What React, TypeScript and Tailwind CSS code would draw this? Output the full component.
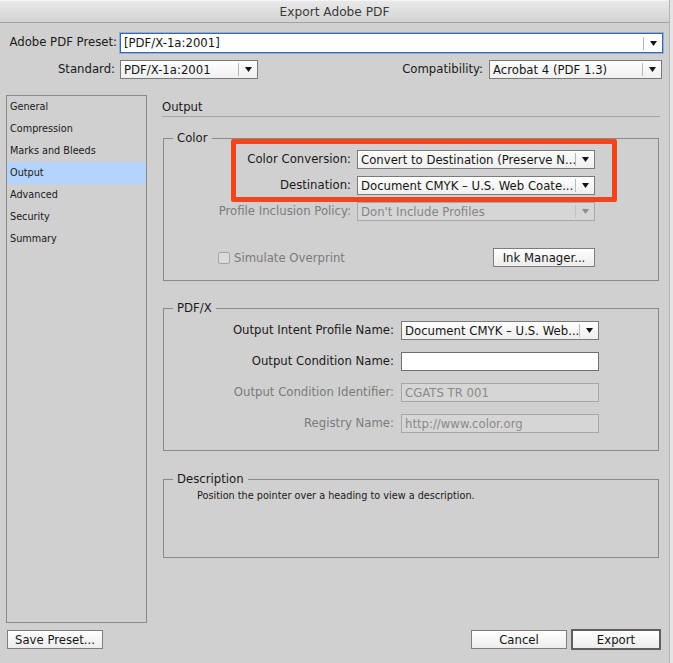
import React from "react";

function Arrow({ disabled }: { disabled?: boolean }) {
  return (
    <div className="flex h-full shrink-0 items-center">
      <div className={`h-[13px] w-px ${disabled ? "bg-[#c2c2c2]" : "bg-[#b8b8b8]"}`} />
      <div className="flex w-[18px] items-center justify-center">
        <svg width="7" height="5" viewBox="0 0 7 5">
          <path d="M0 0H7L3.5 5Z" fill={disabled ? "#8c8c8c" : "#141414"} />
        </svg>
      </div>
    </div>
  );
}

function Select({
  text,
  className = "",
  disabled,
  focus,
}: {
  text: string;
  className?: string;
  disabled?: boolean;
  focus?: boolean;
}) {
  const skin = disabled
    ? "border-[#a8a8a8] bg-[#d6d6d6] text-[#858585]"
    : focus
    ? "border-[#3d66a8] bg-white text-[#151515] shadow-[0_0_0_1px_#8eaee0]"
    : "border-[#7a7a7a] bg-linear-to-b from-white to-[#efefef] text-[#151515]";
  return (
    <div className={`flex h-[19px] items-center border ${skin} ${className}`}>
      <span className="min-w-0 flex-1 overflow-hidden whitespace-nowrap pl-[3px] leading-[14px]">{text}</span>
      <Arrow disabled={disabled} />
    </div>
  );
}

function Field({ text, disabled, className = "" }: { text?: string; disabled?: boolean; className?: string }) {
  return (
    <div
      className={`flex h-[19px] items-center border ${
        disabled ? "border-[#a8a8a8] bg-[#d6d6d6] text-[#8a8a8a]" : "border-[#6f6f6f] bg-white text-[#151515]"
      } ${className}`}
    >
      <span className="pl-[3px] leading-[14px]">{text}</span>
    </div>
  );
}

function Button({ label, className = "", primary }: { label: string; className?: string; primary?: boolean }) {
  return (
    <div
      className={`flex items-center justify-center bg-linear-to-b from-white to-[#ececec] text-[#151515] ${
        primary ? "h-[21px] border-2 border-[#5e5e5e]" : "h-[19px] border border-[#7d7d7d]"
      } ${className}`}
    >
      <span className="leading-[14px]">{label}</span>
    </div>
  );
}

const sideItems = ["General", "Compression", "Marks and Bleeds", "Output", "Advanced", "Security", "Summary"];

export default function App() {
  return (
    <div className="flex h-[663px] w-[673px] overflow-hidden font-['DejaVu_Sans',sans-serif] text-[11.7px] text-[#1a1a1a]">
      <div className="flex h-full w-[669px] flex-col bg-[#d0d0d0]">
        {/* title bar */}
        <div className="flex h-[23px] shrink-0 items-center justify-center border-t border-t-[#f4f4f4] border-b border-b-[#a3a3a3] bg-linear-to-b from-[#e9e9e9] to-[#d3d3d3]">
          <span className="text-[12.2px] leading-[14px] text-[#3a3a3a]">Export Adobe PDF</span>
        </div>

        <div className="flex flex-1 flex-col px-[6px]">
          {/* preset row */}
          <div className="mt-[10px] flex h-[20px] items-center">
            <div className="w-[111px] whitespace-nowrap text-right">Adobe PDF Preset:</div>
            <Select focus text="[PDF/X-1a:2001]" className="ml-[3px] h-[20px] flex-1" />
          </div>
          {/* standard row */}
          <div className="mt-[7px] flex h-[19px] items-center pr-[1px]">
            <div className="w-[109px] whitespace-nowrap text-right">Standard:</div>
            <Select text="PDF/X-1a:2001" className="ml-[5px] w-[138px]" />
            <div className="flex-1" />
            <div className="whitespace-nowrap">Compatibility:</div>
            <Select text="Acrobat 4 (PDF 1.3)" className="ml-[6px] w-[173px]" />
          </div>

          {/* main area */}
          <div className="mt-[16px] flex">
            <div className="h-[528px] w-[141px] shrink-0 border border-[#8a8a8a] text-[9.7px]">
              {sideItems.map((s) => (
                <div
                  key={s}
                  className={`flex h-[22px] items-center pl-[3px] ${s === "Output" ? "bg-[#b4d4fd]" : ""}`}
                >
                  {s}
                </div>
              ))}
            </div>

            <div className="relative ml-[15px] flex w-[498px] flex-col">
              <div className="border-b border-[#a4a4a4] pt-[5px] pb-[2px] leading-[14px]">Output</div>

              {/* Color */}
              <fieldset className="mx-[1px] mt-[14px] border border-[#8a8a8a] pr-[63px] pt-[5px] pb-[13px]">
                <legend className="ml-[9px] px-[4px] leading-[14px]">Color</legend>
                <div className="flex flex-col gap-[7px]">
                  <div className="flex items-center justify-end">
                    <span className="mr-[6px] whitespace-nowrap">Color Conversion:</span>
                    <Select text="Convert to Destination (Preserve N..." className="w-[238px]" />
                  </div>
                  <div className="flex items-center justify-end">
                    <span className="mr-[6px] whitespace-nowrap">Destination:</span>
                    <Select text="Document CMYK – U.S. Web Coate..." className="w-[238px]" />
                  </div>
                  <div className="flex items-center justify-end">
                    <span className="mr-[6px] whitespace-nowrap text-[#7b7b7b]">Profile Inclusion Policy:</span>
                    <Select disabled text="Don't Include Profiles" className="w-[238px]" />
                  </div>
                </div>
                <div className="mt-[27px] flex items-center justify-between pl-[54px]">
                  <div className="flex items-center text-[#7b7b7b]">
                    <div className="h-[12px] w-[12px] rounded-[2px] border border-[#a6a6a6] bg-[#dadada]" />
                    <span className="ml-[4px] leading-[14px]">Simulate Overprint</span>
                  </div>
                  <Button label="Ink Manager..." className="w-[102px]" />
                </div>
              </fieldset>

              {/* PDF/X */}
              <fieldset className="mx-[1px] mt-[20px] border border-[#8a8a8a] pr-[59px] pt-[6px] pb-[17px]">
                <legend className="ml-[9px] px-[4px] leading-[14px]">PDF/X</legend>
                <div className="flex flex-col gap-[12px]">
                  <div className="flex items-center justify-end">
                    <span className="mr-[7px] whitespace-nowrap">Output Intent Profile Name:</span>
                    <Select text="Document CMYK – U.S. Web..." className="w-[198px]" />
                  </div>
                  <div className="flex items-center justify-end">
                    <span className="mr-[7px] whitespace-nowrap">Output Condition Name:</span>
                    <Field className="w-[198px]" />
                  </div>
                  <div className="flex items-center justify-end">
                    <span className="mr-[7px] whitespace-nowrap text-[#7b7b7b]">Output Condition Identifier:</span>
                    <Field disabled text="CGATS TR 001" className="w-[198px]" />
                  </div>
                  <div className="flex items-center justify-end">
                    <span className="mr-[7px] whitespace-nowrap text-[#7b7b7b]">Registry Name:</span>
                    <Field disabled text="http://www.color.org" className="w-[198px]" />
                  </div>
                </div>
              </fieldset>

              {/* Description */}
              <fieldset className="mx-[1px] mt-[21px] h-[86px] border border-[#8a8a8a] pt-[3px]">
                <legend className="ml-[9px] px-[4px] leading-[14px]">Description</legend>
                <div className="pl-[33px] text-[9.7px] leading-[13px]">
                  Position the pointer over a heading to view a description.
                </div>
              </fieldset>

              {/* red highlight annotation */}
              <div className="pointer-events-none absolute left-[69px] top-[44px] h-[63px] w-[386px] rounded-[2px] border-[5px] border-[#f2451e]" />
            </div>
          </div>

          {/* bottom buttons */}
          <div className="mt-[6px] flex items-center">
            <Button label="Save Preset..." className="ml-[1px] w-[96px]" />
            <div className="flex-1" />
            <Button label="Cancel" className="w-[96px]" />
            <Button primary label="Export" className="ml-[4px] w-[90px]" />
            <div className="w-[2px]" />
          </div>
        </div>
      </div>
      <div className="h-full flex-1 border-l border-[#b5b5b5] bg-[#e4e4e4]" />
    </div>
  );
}
